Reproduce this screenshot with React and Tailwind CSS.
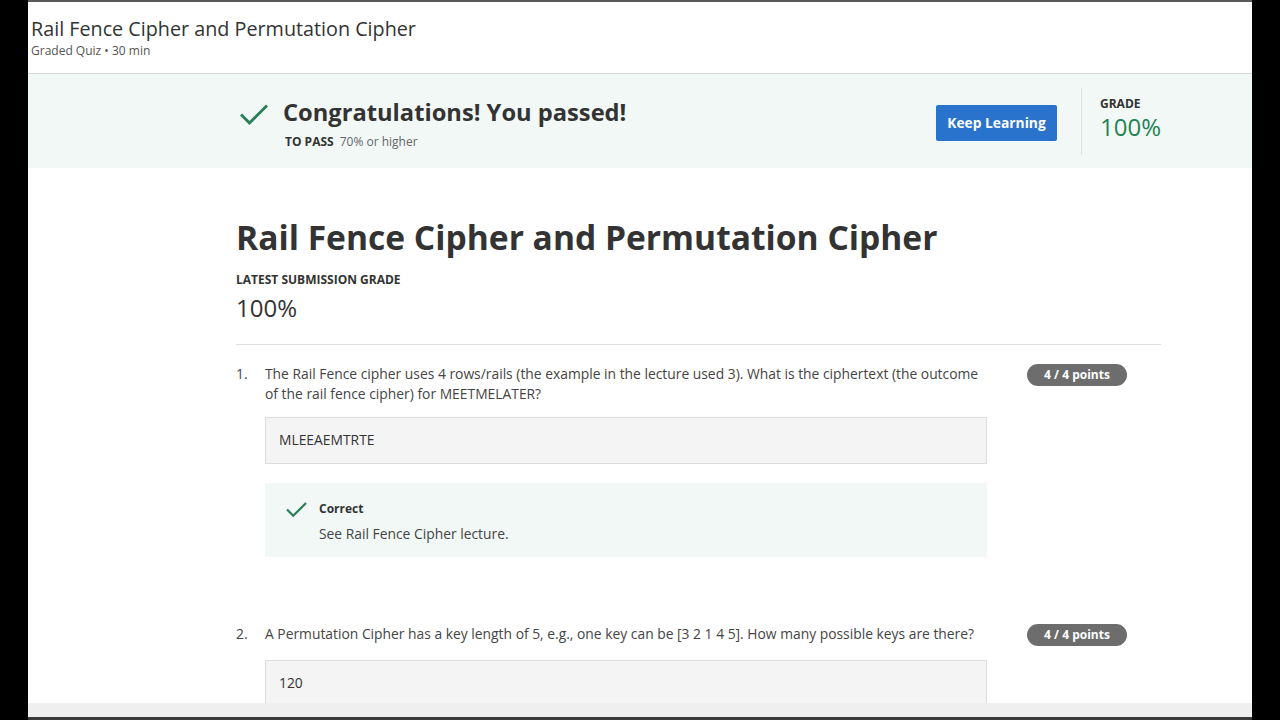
import React from "react";

const Check = ({ className }) => (
  <svg viewBox="0 0 28 22" className={className} fill="none">
    <path d="M2 11.5 L9.5 19 L26 2.5" stroke="#2a7f57" strokeWidth="3" strokeLinecap="square" />
  </svg>
);

const Badge = () => (
  <div className="ml-[40px] flex h-[22px] w-[100px] shrink-0 items-center justify-center rounded-full bg-[#6d6d6d] text-[12px] font-bold text-white">
    4 / 4 points
  </div>
);

export default function App() {
  return (
    <div
      className="flex h-[720px] w-[1280px] overflow-hidden bg-black"
      style={{ fontFamily: '"Open Sans", "Liberation Sans", sans-serif' }}
    >
      <div className="ml-[28px] flex h-full w-[1224px] flex-col bg-white">
        {/* HEADER */}
        <div className="h-[2px] bg-[#5a5a5a]" />
        <div className="h-[72px] shrink-0 border-b border-[#d6d6d6] pl-[3px] pt-[14px]">
          <div className="text-[19.75px] leading-[26px] text-[#333]">
            Rail Fence Cipher and Permutation Cipher
          </div>
          <div className="mt-[1px] text-[12px] leading-[16px] text-[#555]">
            Graded Quiz • 30 min
          </div>
        </div>

        {/* BANNER */}
        <div className="h-[94px] shrink-0 bg-[#f2f8f6]">
          <div className="ml-[208px] flex h-full w-[925px]">
            <div className="flex flex-1 pt-[22px]">
              <Check className="ml-[4px] mt-[8px] h-[22px] w-[28px]" />
              <div className="ml-[15px]">
                <div className="text-[23.7px] font-bold leading-[32px] text-[#333]">
                  Congratulations! You passed!
                </div>
                <div className="mt-[6px] flex text-[12px] leading-[16px]">
                  <span className="ml-[2px] font-bold text-[#333]">TO PASS</span>
                  <span className="ml-[6px] text-[#666]">70% or higher</span>
                </div>
              </div>
            </div>
            <div className="mt-[31px] flex h-[36px] w-[121px] items-center justify-center rounded-[2px] bg-[#2a73cc] text-[13.8px] font-bold text-white">
              Keep Learning
            </div>
            <div className="ml-[24px] mt-[14px] h-[67px] w-px bg-[#dde3e1]" />
            <div className="ml-[18px] pt-[22px]">
              <div className="text-[12px] font-bold leading-[16px] text-[#333]">GRADE</div>
              <div className="mt-[1px] text-[24px] leading-[28px] text-[#1f8354]">100%</div>
            </div>
          </div>
        </div>

        {/* MAIN */}
        <div className="min-h-0 flex-1 overflow-hidden">
          <div className="ml-[208px] w-[925px]">
            <h1 className="mt-[47px] text-[33.6px] font-bold leading-[44px] text-[#333]">
              Rail Fence Cipher and Permutation Cipher
            </h1>
            <div className="mt-[13px] text-[12px] font-bold leading-[16px] text-[#333]">
              LATEST SUBMISSION GRADE
            </div>
            <div className="mt-[4px] text-[24px] leading-[32px] text-[#333]">100%</div>
            <div className="mt-[20px] h-px bg-[#e0e0e0]" />

            {/* QUESTION 1 */}
            <div className="mt-[19px] flex">
              <div className="w-[29px] text-[13.85px] leading-[20px] text-[#444]">1.</div>
              <div className="w-[722px]">
                <div className="text-[13.85px] leading-[20px] text-[#444]">
                  The Rail Fence cipher uses 4 rows/rails (the example in the lecture used 3). What is the ciphertext (the outcome of the rail fence cipher) for MEETMELATER?
                </div>
                <div className="mt-[13px] flex h-[47px] items-center border border-[#dcdcdc] bg-[#f4f4f4] pl-[13px] text-[13.85px] text-[#333]">
                  MLEEAEMTRTE
                </div>
                <div className="mt-[19px] flex h-[74px] bg-[#f2f8f6] pl-[21px] pt-[18px]">
                  <Check className="mt-[1px] h-[16px] w-[21px]" />
                  <div className="ml-[12px]">
                    <div className="text-[12px] font-bold leading-[16px] text-[#333]">Correct</div>
                    <div className="mt-[7px] text-[13.85px] leading-[20px] text-[#444]">
                      See Rail Fence Cipher lecture.
                    </div>
                  </div>
                </div>
              </div>
              <Badge />
            </div>

            {/* QUESTION 2 */}
            <div className="mt-[67px] flex">
              <div className="w-[29px] text-[13.85px] leading-[20px] text-[#444]">2.</div>
              <div className="w-[722px]">
                <div className="text-[13.85px] leading-[20px] text-[#444]">
                  A Permutation Cipher has a key length of 5, e.g., one key can be [3 2 1 4 5]. How many possible keys are there?
                </div>
                <div className="mt-[16px] flex h-[47px] items-center border border-[#dcdcdc] bg-[#f4f4f4] pl-[13px] text-[13.85px] text-[#333]">
                  120
                </div>
              </div>
              <Badge />
            </div>
          </div>
        </div>

        {/* BOTTOM BAR */}
        <div className="h-[14px] shrink-0 bg-[#efefef]" />
        <div className="h-[3px] shrink-0 bg-[#3a3a3a]" />
      </div>
    </div>
  );
}
